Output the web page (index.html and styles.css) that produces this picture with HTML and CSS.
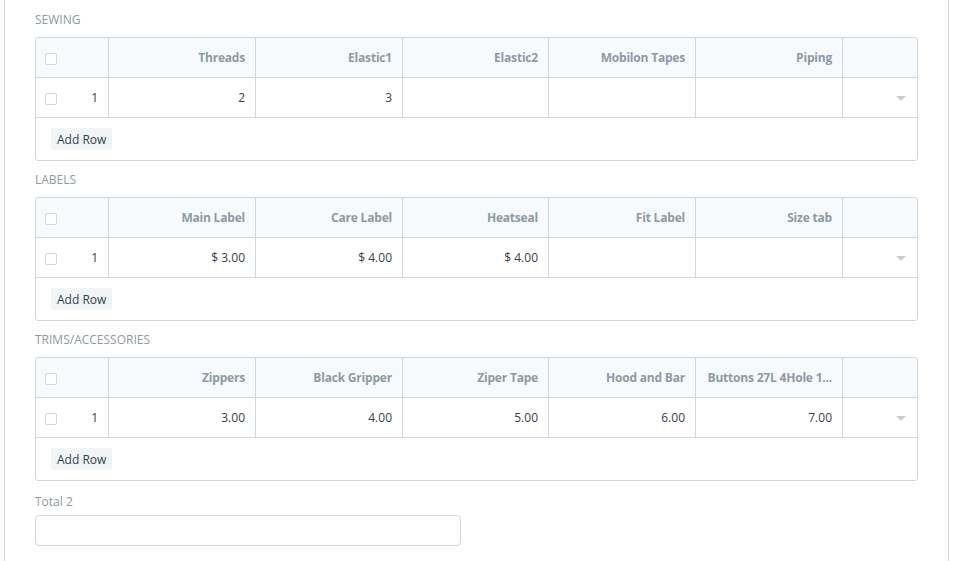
FILE: index.html
```html
<!DOCTYPE html>
<html>
<head>
<meta charset="utf-8">
<link rel="stylesheet" href="styles.css">
</head>
<body>
<div class="page">
  <section class="field">
    <div class="label">SEWING</div>
    <div class="grid">
      <div class="row head">
        <div class="cell idx"><span class="chk"></span></div>
        <div class="cell">Threads</div>
        <div class="cell">Elastic1</div>
        <div class="cell">Elastic2</div>
        <div class="cell">Mobilon Tapes</div>
        <div class="cell">Piping</div>
        <div class="cell last"></div>
      </div>
      <div class="row body">
        <div class="cell idx"><span class="chk"></span><span class="num">1</span></div>
        <div class="cell">2</div>
        <div class="cell">3</div>
        <div class="cell"></div>
        <div class="cell"></div>
        <div class="cell"></div>
        <div class="cell last"><span class="caret"></span></div>
      </div>
      <div class="foot"><button class="btn">Add Row</button></div>
    </div>
  </section>

  <section class="field">
    <div class="label">LABELS</div>
    <div class="grid">
      <div class="row head">
        <div class="cell idx"><span class="chk"></span></div>
        <div class="cell">Main Label</div>
        <div class="cell">Care Label</div>
        <div class="cell">Heatseal</div>
        <div class="cell">Fit Label</div>
        <div class="cell">Size tab</div>
        <div class="cell last"></div>
      </div>
      <div class="row body">
        <div class="cell idx"><span class="chk"></span><span class="num">1</span></div>
        <div class="cell">$ 3.00</div>
        <div class="cell">$ 4.00</div>
        <div class="cell">$ 4.00</div>
        <div class="cell"></div>
        <div class="cell"></div>
        <div class="cell last"><span class="caret"></span></div>
      </div>
      <div class="foot"><button class="btn">Add Row</button></div>
    </div>
  </section>

  <section class="field">
    <div class="label">TRIMS/ACCESSORIES</div>
    <div class="grid">
      <div class="row head">
        <div class="cell idx"><span class="chk"></span></div>
        <div class="cell">Zippers</div>
        <div class="cell">Black Gripper</div>
        <div class="cell">Ziper Tape</div>
        <div class="cell">Hood and Bar</div>
        <div class="cell">Buttons 27L 4Hole 1...</div>
        <div class="cell last"></div>
      </div>
      <div class="row body">
        <div class="cell idx"><span class="chk"></span><span class="num">1</span></div>
        <div class="cell">3.00</div>
        <div class="cell">4.00</div>
        <div class="cell">5.00</div>
        <div class="cell">6.00</div>
        <div class="cell">7.00</div>
        <div class="cell last"><span class="caret"></span></div>
      </div>
      <div class="foot"><button class="btn">Add Row</button></div>
    </div>
  </section>

  <section class="field total">
    <div class="label plain">Total 2</div>
    <div class="input"></div>
  </section>
</div>
</body>
</html>
```

FILE: styles.css
```css
html, body {
  margin: 0;
  padding: 0;
  background: #fff;
}
body {
  font-family: "Open Sans", "Noto Sans", sans-serif;
  font-size: 12px;
  color: #36414c;
}
.page {
  margin-left: 4px;
  width: 883px;
  min-height: 561px;
  border-left: 1px solid #d1d8dd;
  border-right: 1px solid #d1d8dd;
  padding: 10px 30px 0 30px;
  box-sizing: content-box;
}
.field {
  margin-bottom: 9px;
}
.label {
  height: 18px;
  line-height: 18px;
  padding-top: 1px;
  color: #8d99a6;
  font-size: 12px;
  margin-bottom: 8px;
}
.label.plain {
  padding-top: 3px;
  margin-bottom: 4px;
}
.grid {
  border: 1px solid #d1d8dd;
  border-radius: 3px;
}
.row {
  display: grid;
  grid-template-columns: 73px 147px 147px 146px 147px 147px 74px;
  height: 40px;
  border-bottom: 1px solid #d1d8dd;
  box-sizing: border-box;
}
.row.head {
  background: #f7fafc;
  border-radius: 3px 3px 0 0;
}
.row.head .cell {
  font-weight: 700;
  color: #8d99a6;
  letter-spacing: -0.2px;
  padding-bottom: 1px;
}
.cell {
  border-right: 1px solid #d1d8dd;
  padding: 0 10px;
  display: flex;
  align-items: center;
  justify-content: flex-end;
  white-space: nowrap;
  overflow: hidden;
  text-overflow: ellipsis;
  min-width: 0;
}
.cell.last {
  border-right: none;
}
.cell.idx {
  justify-content: space-between;
  padding: 0 10px 0 9px;
}
.chk {
  width: 12px;
  height: 12px;
  box-sizing: border-box;
  border: 1px solid #d1d8dd;
  border-radius: 2px;
  background: #fff;
  margin-top: 3px;
}
.num {
  color: #36414c;
  font-weight: 400;
  letter-spacing: 0;
}
.caret {
  width: 0;
  height: 0;
  border-left: 5px solid transparent;
  border-right: 5px solid transparent;
  border-top: 5px solid #c8ced3;
  margin-right: 1px;
  margin-top: 2px;
}
.foot {
  height: 42px;
  padding: 10px 0 0 15px;
  box-sizing: border-box;
}
.btn {
  font-family: inherit;
  font-size: 12px;
  color: #36414c;
  background: #f0f4f7;
  border: none;
  border-radius: 3px;
  height: 22px;
  padding: 1px 6px 0 6px;
  line-height: 21px;
  display: block;
}
.input {
  width: 426px;
  height: 31px;
  box-sizing: border-box;
  border: 1px solid #d1d8dd;
  border-radius: 4px;
  background: #fff;
}
```
